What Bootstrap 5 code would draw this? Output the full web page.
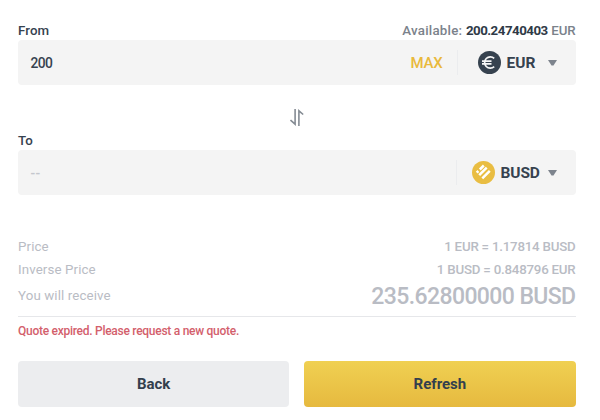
<!DOCTYPE html>
<html lang="en">
<head>
<meta charset="utf-8">
<meta name="viewport" content="width=device-width, initial-scale=1">
<title>Convert</title>
<link href="https://cdn.jsdelivr.net/npm/bootstrap@5.3.0/dist/css/bootstrap.min.css" rel="stylesheet">
<style>
body{font-family:Roboto,"Liberation Sans",sans-serif;font-size:13.3px;line-height:20px;color:#36424f;background:#fff}
.convert{padding:21px 24.5px 0 18px;height:420px;overflow:hidden}
.head{height:19px}
.label-text{font-weight:500;letter-spacing:.1px}
.avail{color:#7b828b;font-weight:500;letter-spacing:.25px}
.avail b{font-weight:700;color:#2f3a47;letter-spacing:-.5px}
.avail .unit{letter-spacing:-.1px}
.field{height:45px;background:#f4f4f4;border-radius:4px;padding-left:12.5px}
.amount{font-size:13.8px;font-weight:500;letter-spacing:-.6px}
.amount-empty{color:#c4c7cd;letter-spacing:.2px}
.max{color:#e9b93c;font-size:15px;font-weight:500;width:46px;letter-spacing:-.2px}
.coin{height:25px;border-left:1px solid #ebecee;width:119px;padding-left:20px;padding-right:19px}
.coin-busd{width:120px;padding-left:15px}
.coin-name{font-size:15.5px;font-weight:700;margin-left:6px}
.coin-busd .coin-name{letter-spacing:-.1px}
.swap{height:45px;padding-top:24px}
.to-label{height:20px;line-height:22px}
.quote{color:#b9bcc4;font-weight:400;margin-top:40px;letter-spacing:.12px}
.quote-row{height:23px}
.quote-value{font-weight:500;letter-spacing:-.22px}
.receive{height:30px}
.total{font-size:23px;font-weight:500;letter-spacing:-.6px;padding-top:2px}
.rule{border-top:1px solid #e6e7ea;margin-top:5px}
.error-text{color:#d3606c;font-size:12px;font-weight:500;letter-spacing:-.27px;margin-top:4px}
.actions{gap:15px;margin-top:20px}
.actions .btn{height:46px;border:0;border-radius:4px;font-size:15px;font-weight:700;color:#333f4d;padding:0;flex:1 1 0}
.actions .btn-back{background:#ecedef}
.actions .btn-refresh{background:linear-gradient(#f0d052,#e6b93f)}
</style>
</head>
<body>
<main class="convert d-flex flex-column">
  <div class="head d-flex justify-content-between">
    <span class="label-text">From</span>
    <span class="avail">Available: <b>200.24740403</b> <span class="unit">EUR</span></span>
  </div>
  <div class="field d-flex align-items-center">
    <span class="amount flex-grow-1">200</span>
    <span class="max">MAX</span>
    <div class="coin d-flex align-items-center">
      <svg width="23" height="23" viewBox="0 0 23 23"><circle cx="11.5" cy="11.5" r="11.5" fill="#36424f"/><path d="M16.2 7.3A5.7 5.7 0 1 0 16.2 15.7M4 10.2H13.5M4 12.9H13.5" fill="none" stroke="#f7f7f7" stroke-width="1.7"/></svg>
      <span class="coin-name">EUR</span>
      <svg class="ms-auto" width="9" height="6" viewBox="0 0 9 6"><path d="M0 0H9L5.5 5.5H3.5Z" fill="#7d848d"/></svg>
    </div>
  </div>
  <div class="swap">
    <svg class="d-block mx-auto" width="14" height="17" viewBox="0 0 14 17"><path d="M5.1 0V15.2L.5 11M8.9 17V1.8L13.2 5.5" fill="none" stroke="#858c94" stroke-width="1.6"/></svg>
  </div>
  <div class="label-text to-label">To</div>
  <div class="field d-flex align-items-center">
    <span class="amount amount-empty flex-grow-1">--</span>
    <div class="coin coin-busd d-flex align-items-center">
      <svg width="23" height="23" viewBox="0 0 23 23"><circle cx="11.5" cy="11.5" r="11.5" fill="#e9bd42"/><path d="M7.8 8.5L11.8 4.5M4.7 11.7L6.4 10M7.2 14.2L14.7 6.7M10.3 17.3L17.8 9.8" fill="none" stroke="#fff" stroke-width="2.5"/></svg>
      <span class="coin-name">BUSD</span>
      <svg class="ms-auto" width="9" height="6" viewBox="0 0 9 6"><path d="M0 0H9L5.5 5.5H3.5Z" fill="#7d848d"/></svg>
    </div>
  </div>
  <section class="quote">
    <div class="quote-row d-flex justify-content-between align-items-center"><span>Price</span><span class="quote-value">1 EUR = 1.17814 BUSD</span></div>
    <div class="quote-row d-flex justify-content-between align-items-center"><span>Inverse Price</span><span class="quote-value">1 BUSD = 0.848796 EUR</span></div>
    <div class="receive d-flex justify-content-between align-items-center"><span>You will receive</span><span class="total">235.62800000 BUSD</span></div>
  </section>
  <div class="rule"></div>
  <div class="error-text">Quote expired. Please request a new quote.</div>
  <div class="actions d-flex">
    <button class="btn btn-back" type="button">Back</button>
    <button class="btn btn-refresh" type="button">Refresh</button>
  </div>
</main>
<script src="https://cdn.jsdelivr.net/npm/bootstrap@5.3.0/dist/js/bootstrap.bundle.min.js"></script>
</body>
</html>
